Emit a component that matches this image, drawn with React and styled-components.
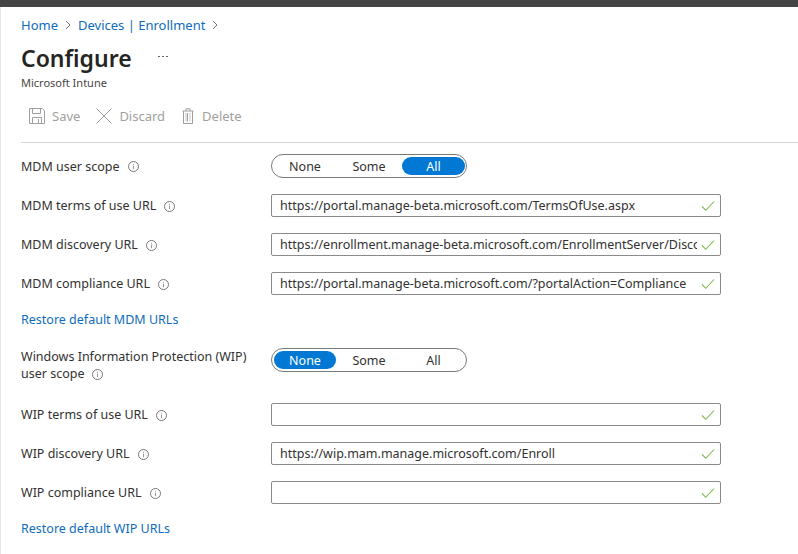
import styled, { createGlobalStyle } from 'styled-components';

const GlobalStyle = createGlobalStyle`
  html, body {
    margin: 0;
    padding: 0;
    height: 100%;
    overflow: hidden;
    background: #fff;
    font-family: "Noto Sans", "Open Sans", sans-serif;
    color: #323130;
  }
`;

const Page = styled.div`
  width: 798px;
  height: 554px;
  display: flex;
  flex-direction: column;
  overflow: hidden;
`;

const TopBar = styled.div`
  height: 7px;
  background: #444444;
  flex: none;
`;

const Blade = styled.div`
  flex: 1;
  border-left: 1px solid #e6e6e6;
  padding-left: 20px;
`;

const Breadcrumb = styled.nav`
  height: 36px;
  display: flex;
  align-items: center;
  gap: 7px;
  font-size: 13px;
  color: #0f6cbd;
`;

const Crumb = styled.a`
  color: #0f6cbd;
  text-decoration: none;
`;

const TitleRow = styled.div`
  height: 30px;
  display: flex;
  align-items: center;
  gap: 26px;
`;

const Title = styled.h1`
  margin: 0;
  font-size: 23px;
  font-weight: 600;
  color: #252423;
  line-height: 30px;
`;

const More = styled.span`
  display: flex;
  gap: 2px;
  margin-top: -3px;
`;

const MoreDot = styled.i`
  width: 2px;
  height: 1px;
  background: #666;
`;

const Subtitle = styled.div`
  font-size: 11px;
  line-height: 16px;
  margin-top: 2px;
  color: #484644;
`;

const Toolbar = styled.div`
  height: 52px;
  box-sizing: border-box;
  border-bottom: 1px solid #d6d6d6;
  display: flex;
  align-items: center;
  padding: 0 0 1px 8px;
`;

const ToolButton = styled.button`
  border: none;
  background: none;
  padding: 0;
  margin-right: 16px;
  display: flex;
  align-items: center;
  gap: 7px;
  font: inherit;
  font-size: 13px;
  color: #a19f9d;
`;

const Form = styled.div`
  width: 700px;
  display: flex;
  flex-direction: column;
`;

const Row = styled.div`
  display: grid;
  grid-template-columns: 250px 450px;
  align-items: ${props => (props.$top ? 'start' : 'center')};
  margin-top: ${props => props.$gap}px;
`;

const Label = styled.div`
  font-size: 12.5px;
  line-height: 17px;
  color: #323130;
`;

const InfoIcon = styled.svg`
  width: 11px;
  height: 11px;
  margin-left: 8px;
  vertical-align: -1.5px;
`;

const Toggle = styled.div`
  width: 196px;
  height: 24px;
  box-sizing: border-box;
  border: 1px solid #7a7a7a;
  border-radius: 12px;
  padding: 2px;
  display: grid;
  grid-template-columns: 62px 64px 63px;
  gap: 1px;
`;

const ToggleOption = styled.div`
  display: flex;
  align-items: center;
  justify-content: center;
  border-radius: 9px;
  font-size: 12.5px;
  background: ${props => (props.$active ? '#0078d4' : 'transparent')};
  color: ${props => (props.$active ? '#fff' : '#323130')};
`;

const Field = styled.div`
  height: 23px;
  box-sizing: border-box;
  border: 1px solid #8a8a8a;
  border-radius: 2px;
  display: flex;
  align-items: center;
  padding: 0 5px 0 8px;
`;

const FieldText = styled.span`
  flex: 1;
  min-width: 0;
  overflow: hidden;
  white-space: nowrap;
  font-size: 12.5px;
  color: #323130;
`;

const Check = styled.svg`
  width: 14px;
  height: 12px;
  flex: none;
  margin-left: 4px;
`;

const RestoreLink = styled.a`
  font-size: 12.5px;
  line-height: 17px;
  color: #0f6cbd;
  text-decoration: none;
  margin-top: ${props => props.$gap}px;
`;

const Info = () => (
  <InfoIcon viewBox="0 0 11 11">
    <circle cx="5.5" cy="5.5" r="5" fill="none" stroke="#777" />
    <rect x="5" y="4.6" width="1" height="3.6" fill="#999" />
    <rect x="5" y="2.8" width="1" height="1" fill="#999" />
  </InfoIcon>
);

const Chevron = () => (
  <svg width="6" height="10" viewBox="0 0 6 10">
    <path d="M1 1l4 4-4 4" fill="none" stroke="#777" />
  </svg>
);

const SaveIcon = () => (
  <svg width="16" height="16" viewBox="0 0 16 16" fill="none" stroke="#a19f9d">
    <path d="M.5.5h12.8l2.2 2.2v12.8H.5z" />
    <path d="M3.5.5v5h8v-5M3.5 15.5v-6h9v6M9.5 11v4.5" />
  </svg>
);

const DiscardIcon = () => (
  <svg width="16" height="16" viewBox="0 0 16 16" fill="none" stroke="#a19f9d">
    <path d="M.5.5l15 15M15.5.5l-15 15" />
  </svg>
);

const DeleteIcon = () => (
  <svg width="14" height="16" viewBox="0 0 14 16" fill="none" stroke="#a19f9d">
    <path d="M1.5 3h11M5 3V.8h4V3M2.5 3v12.5h9V3" />
    <path d="M4.5 5v8.5h1V5zM8.5 5v8.5h1V5z" fill="#c8c6c4" stroke="none" />
    <path d="M6.5 5v8.5" />
  </svg>
);

const UrlField = ({ value }) => (
  <Field>
    <FieldText>{value}</FieldText>
    <Check viewBox="0 0 14 12">
      <path d="M1 6.5l3.8 3.8L13 1.5" fill="none" stroke="#7fba50" strokeWidth="1.1" />
    </Check>
  </Field>
);

const ScopeToggle = ({ active }) => (
  <Toggle>
    {['None', 'Some', 'All'].map(option => (
      <ToggleOption key={option} $active={option === active}>{option}</ToggleOption>
    ))}
  </Toggle>
);

const mdmUrls = [
  { label: 'MDM terms of use URL', value: 'https://portal.manage-beta.microsoft.com/TermsOfUse.aspx' },
  { label: 'MDM discovery URL', value: 'https://enrollment.manage-beta.microsoft.com/EnrollmentServer/Discovery.svc' },
  { label: 'MDM compliance URL', value: 'https://portal.manage-beta.microsoft.com/?portalAction=Compliance' },
];

const wipUrls = [
  { label: 'WIP terms of use URL', value: '' },
  { label: 'WIP discovery URL', value: 'https://wip.mam.manage.microsoft.com/Enroll' },
  { label: 'WIP compliance URL', value: '' },
];

const UrlRows = ({ urls, firstGap }) =>
  urls.map((url, i) => (
    <Row key={url.label} $gap={i === 0 ? firstGap : 16}>
      <Label>{url.label}<Info /></Label>
      <UrlField value={url.value} />
    </Row>
  ));

export default function App() {
  return (
    <Page>
      <GlobalStyle />
      <TopBar />
      <Blade>
        <Breadcrumb>
          <Crumb>Home</Crumb>
          <Chevron />
          <Crumb>Devices | Enrollment</Crumb>
          <Chevron />
        </Breadcrumb>
        <TitleRow>
          <Title>Configure</Title>
          <More><MoreDot /><MoreDot /><MoreDot /></More>
        </TitleRow>
        <Subtitle>Microsoft Intune</Subtitle>
        <Toolbar>
          <ToolButton><SaveIcon />Save</ToolButton>
          <ToolButton><DiscardIcon />Discard</ToolButton>
          <ToolButton><DeleteIcon />Delete</ToolButton>
        </Toolbar>
        <Form>
          <Row $gap={11}>
            <Label>MDM user scope<Info /></Label>
            <ScopeToggle active="All" />
          </Row>
          <UrlRows urls={mdmUrls} firstGap={16} />
          <RestoreLink $gap={16}>Restore default MDM URLs</RestoreLink>
          <Row $gap={20} $top>
            <Label>Windows Information Protection (WIP) user scope<Info /></Label>
            <ScopeToggle active="None" />
          </Row>
          <UrlRows urls={wipUrls} firstGap={21} />
          <RestoreLink $gap={16}>Restore default WIP URLs</RestoreLink>
        </Form>
      </Blade>
    </Page>
  );
}
